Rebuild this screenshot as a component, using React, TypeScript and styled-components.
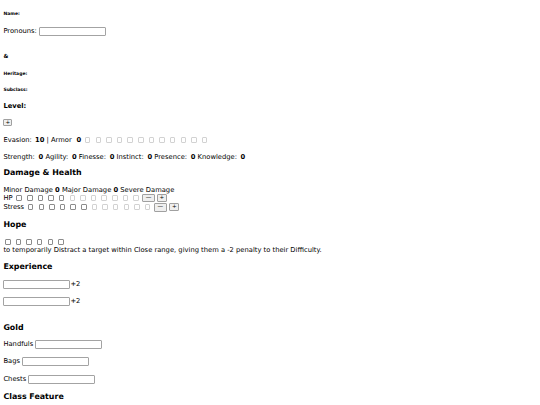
import styled, { createGlobalStyle } from "styled-components";

const GlobalStyle = createGlobalStyle`
    html, body {
        margin: 0;
        padding: 0;
        background: #ffffff;
    }
    body {
        font-family: "DejaVu Sans", Verdana, sans-serif;
        font-size: 6.75px;
        color: #000000;
    }
`;

const Sheet = styled.div`
    display: flex;
    flex-direction: column;
    align-items: flex-start;
    padding: 0 3.4px;
`;

const Label = styled.div<{ $size: number; $line: number; $top: number }>`
    font-size: ${(p) => p.$size}px;
    line-height: ${(p) => p.$line}px;
    height: ${(p) => p.$line}px;
    margin-top: ${(p) => p.$top}px;
    font-weight: bold;
    white-space: nowrap;
`;

const Line = styled.div<{ $top?: number; $line?: number }>`
    margin-top: ${(p) => p.$top ?? 0}px;
    height: ${(p) => p.$line ?? 8}px;
    line-height: ${(p) => p.$line ?? 8}px;
    display: flex;
    align-items: center;
    white-space: nowrap;
`;

const Text = styled.span`
    white-space: pre;
`;

const Value = styled.b<{ $lead?: number }>`
    margin-left: ${(p) => p.$lead ?? 0}px;
`;

const TextInput = styled.input.attrs({ type: "text" })`
    width: 67px;
    height: 9px;
    box-sizing: border-box;
    margin: 0;
    padding: 0;
    border: 1px solid #a3a3a3;
    border-radius: 1px;
    background: #ffffff;
`;

const Box = styled.span<{ $off?: boolean; $lead?: number }>`
    display: inline-block;
    flex: none;
    width: 5.5px;
    height: 5.5px;
    box-sizing: border-box;
    margin: 0 3.45px 0 ${(p) => p.$lead ?? 1.7}px;
    border: 1px solid ${(p) => (p.$off ? "#d2d2d2" : "#8c8c8c")};
    border-radius: 1px;
    background: #ffffff;
`;

const SmallButton = styled.button<{ $w: number; $h: number }>`
    flex: none;
    width: ${(p) => p.$w}px;
    height: ${(p) => p.$h}px;
    box-sizing: border-box;
    margin: 0 2.2px 0 0;
    padding: 0;
    font-family: "DejaVu Sans", Verdana, sans-serif;
    font-size: 5.6px;
    line-height: 1;
    color: #000000;
    background: #efefef;
    border: 1px solid #a0a0a0;
    border-radius: 1px;
    display: inline-flex;
    align-items: center;
    justify-content: center;
`;

const Stack = styled.div<{ $top: number }>`
    margin-top: ${(p) => p.$top}px;
    line-height: 8px;
    white-space: nowrap;
`;

const Boxes = ({ on, total, lead = 3.85 }: { on: number; total: number; lead?: number }) => (
    <>
        {Array.from({ length: total }, (_, i) => (
            <Box key={i} $off={i >= on} $lead={i === 0 ? lead : 1.7} />
        ))}
    </>
);

const traits = ["Strength", "Agility", "Finesse", "Instinct", "Presence", "Knowledge"];

export default function App() {
    return (
        <>
            <GlobalStyle />
            <Sheet>
                <Label $size={4.5} $line={6} $top={10.5}>Name:</Label>
                <Line $top={9.5} $line={10}>
                    <Text>Pronouns: </Text>
                    <TextInput />
                </Line>
                <Label $size={5.6} $line={7} $top={16.5}>&amp;</Label>
                <Label $size={4.5} $line={6} $top={11}>Heritage:</Label>
                <Label $size={4.5} $line={6} $top={10.5}>Subclass:</Label>
                <Label $size={6.75} $line={8} $top={8.5}>Level:</Label>
                <Line $top={9}>
                    <SmallButton $w={9} $h={7}>+</SmallButton>
                </Line>
                <Line $top={9.5}>
                    <Text>Evasion: </Text>
                    <Value $lead={1}>10</Value>
                    <Text> | Armor </Text>
                    <Value $lead={2.5}>0</Value>
                    <Boxes on={0} total={12} />
                </Line>
                <Line $top={9}>
                    {traits.map((t, i) => (
                        <Text key={t}>
                            {t}: <Value $lead={1.5}>0</Value>
                            {i < traits.length - 1 ? " " : ""}
                        </Text>
                    ))}
                </Line>
                <Label $size={7.9} $line={9} $top={7}>Damage &amp; Health</Label>
                <Stack $top={9}>
                    <Line>
                        <Text>
                            Minor Damage <b>0</b> Major Damage <b>0</b> Severe Damage
                        </Text>
                    </Line>
                    <Line>
                        <Text>HP</Text>
                        <Boxes on={5} total={12} />
                        <SmallButton $w={12.5} $h={8.5}>—</SmallButton>
                        <SmallButton $w={10} $h={8}>+</SmallButton>
                    </Line>
                    <Line $line={10}>
                        <Text>Stress</Text>
                        <Boxes on={6} total={12} />
                        <SmallButton $w={13} $h={9}>—</SmallButton>
                        <SmallButton $w={10.5} $h={8}>+</SmallButton>
                    </Line>
                </Stack>
                <Label $size={7.9} $line={9} $top={8}>Hope</Label>
                <Stack $top={9}>
                    <Line>
                        <Boxes on={6} total={6} lead={1.7} />
                    </Line>
                    <Line>
                        <Text>
                            to temporarily Distract a target within Close range, giving them a -2 penalty to
                            their Difficulty.
                        </Text>
                    </Line>
                </Stack>
                <Label $size={7.9} $line={9} $top={8}>Experience</Label>
                <Line $top={8} $line={10}>
                    <TextInput />
                    <Text>+2</Text>
                </Line>
                <Line $top={7} $line={10}>
                    <TextInput />
                    <Text>+2</Text>
                </Line>
                <Label $size={7.9} $line={9} $top={16.5}>Gold</Label>
                <Line $top={7.5} $line={10}>
                    <Text>Handfuls </Text>
                    <TextInput />
                </Line>
                <Line $top={7} $line={10}>
                    <Text>Bags </Text>
                    <TextInput />
                </Line>
                <Line $top={8} $line={10}>
                    <Text>Chests </Text>
                    <TextInput />
                </Line>
                <Label $size={7.9} $line={9} $top={7.5}>Class Feature</Label>
            </Sheet>
        </>
    );
}
